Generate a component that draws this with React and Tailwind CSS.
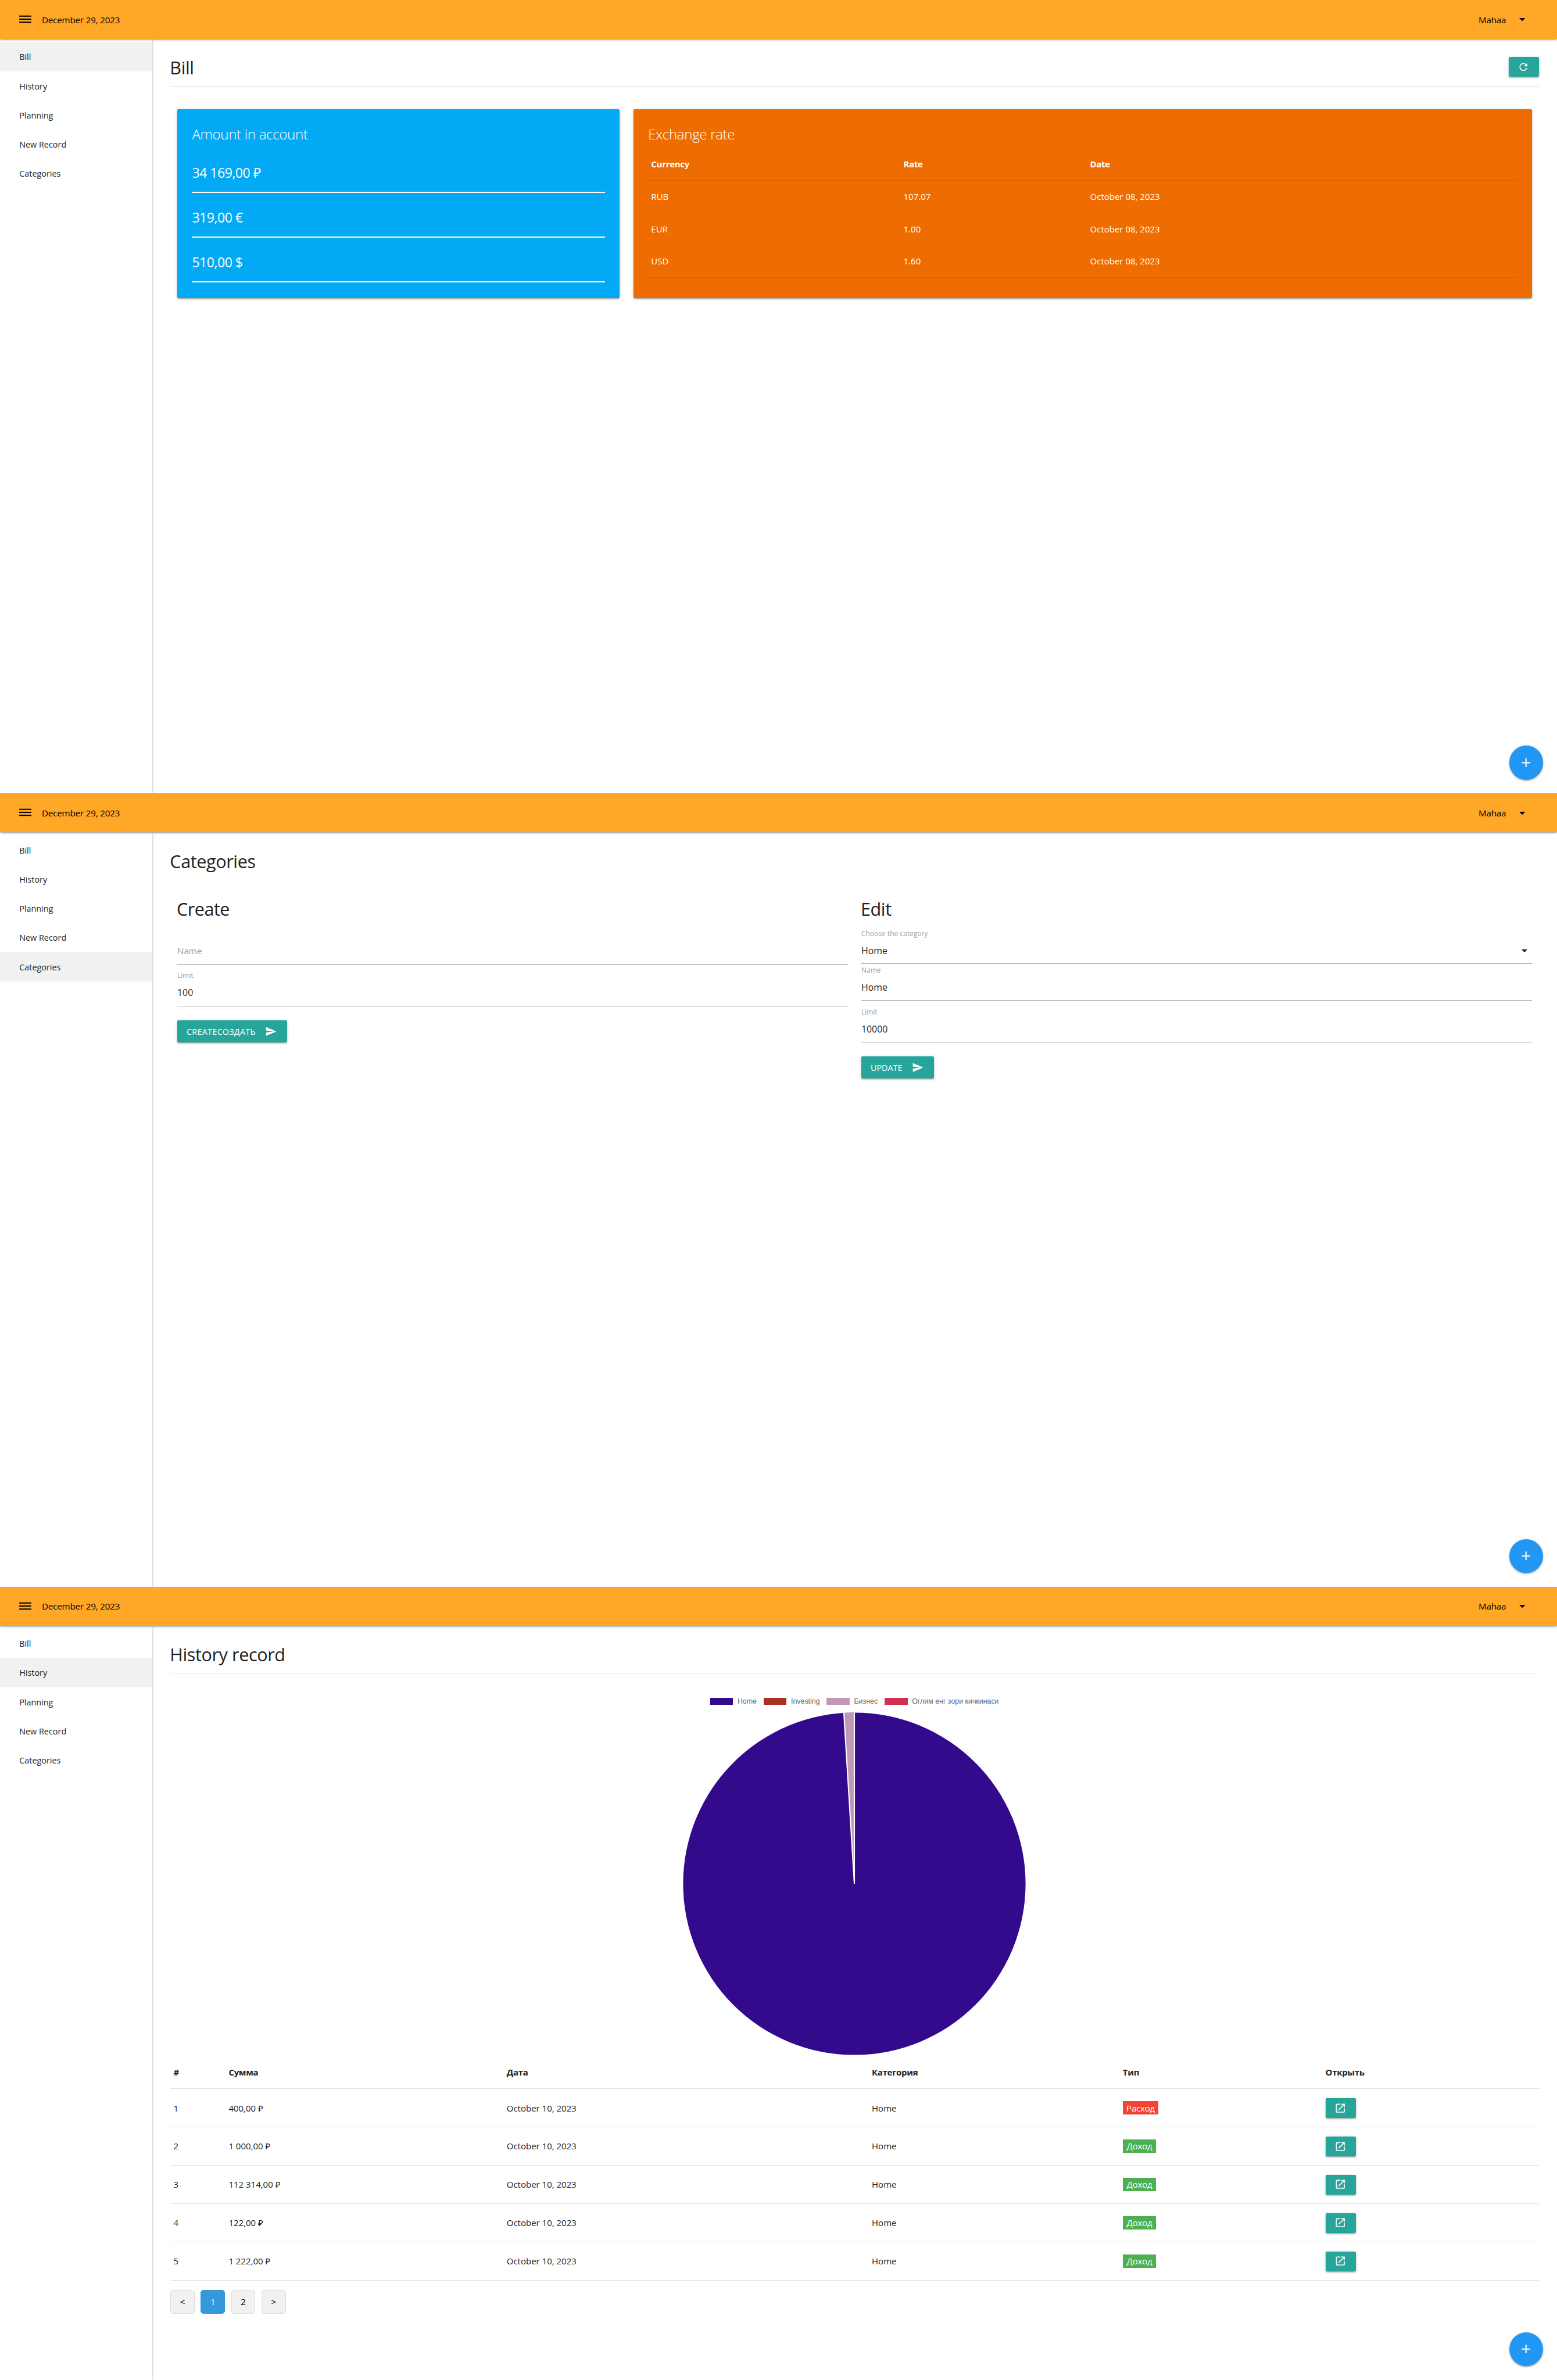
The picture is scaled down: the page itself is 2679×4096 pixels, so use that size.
import React from "react";

const NAV_ITEMS = ["Bill", "History", "Planning", "New Record", "Categories"];

const SHADOW =
  "shadow-[0_2px_2px_0_rgba(0,0,0,0.14),0_3px_1px_-2px_rgba(0,0,0,0.12),0_1px_5px_0_rgba(0,0,0,0.2)]";

function Icon({ d, className }) {
  return (
    <svg viewBox="0 0 24 24" fill="currentColor" className={className}>
      <path d={d} />
    </svg>
  );
}

const ICONS = {
  menu: "M2 15.5v2h20v-2H2zm0-5v2h20v-2H2zm0-5v2h20v-2H2z",
  refresh:
    "M17.65 6.35C16.2 4.9 14.21 4 12 4c-4.42 0-7.99 3.58-7.99 8s3.57 8 7.99 8c3.73 0 6.84-2.55 7.73-6h-2.08c-.82 2.33-3.04 4-5.65 4-3.31 0-6-2.69-6-6s2.69-6 6-6c1.66 0 3.14.69 4.22 1.78L13 11h7V4l-2.35 2.35z",
  add: "M19 13h-6v6h-2v-6H5v-2h6V5h2v6h6v2z",
  send: "M2.01 21L23 12 2.01 3 2 10l15 2-15 2z",
  open: "M19 19H5V5h7V3H5c-1.11 0-2 .9-2 2v14c0 1.1.89 2 2 2h14c1.1 0 2-.9 2-2v-7h-2v7zM14 3v2h3.59l-9.83 9.83 1.41 1.41L19 6.41V10h2V3h-7z",
};

function Caret({ className }) {
  return (
    <svg viewBox="0 0 10 5" fill="currentColor" className={className}>
      <path d="M0 0h10L5 5z" />
    </svg>
  );
}

function Navbar() {
  return (
    <header className={`relative z-10 flex h-[67px] shrink-0 items-center bg-[#ffa726] pr-[54.6px] pl-[31.4px] text-black ${SHADOW}`}>
      <Icon d={ICONS.menu} className="size-[25.1px]" />
      <span className="ml-[15.4px] pt-px text-[15.2px] tracking-[-0.18px]">December 29, 2023</span>
      <span className="mr-[22.9px] ml-auto pt-px text-[15.2px] tracking-[-0.25px]">Mahaa</span>
      <Caret className="mt-[1px] h-[5.2px] w-[10.4px]" />
    </header>
  );
}

function Sidebar({ active }) {
  return (
    <aside className={`relative z-[1] w-[261.5px] shrink-0 bg-white pt-[5.9px] ${SHADOW}`}>
      {NAV_ITEMS.map((item) => (
        <div
          key={item}
          className={`flex h-[50.23px] items-center pt-[0.6px] pl-[33.2px] text-[14.4px] font-medium ${item === active ? "bg-[#f1f1f1]" : ""}`}
        >
          {item}
        </div>
      ))}
    </aside>
  );
}

function Screen({ active, title, action, children }) {
  return (
    <section className="relative flex h-[1365.33px] flex-col overflow-hidden bg-white">
      <Navbar />
      <div className="flex min-h-0 flex-1">
        <Sidebar active={active} />
        <main className="flex-1 pr-[31.5px] pl-[31.8px]">
          <div className="flex h-[82.3px] items-start justify-between border-b border-[#e4e4e4] pt-[29.2px]">
            <h3 className="-ml-px text-[30.6px] leading-[40px] tracking-[-0.4px]">{title}</h3>
            {action}
          </div>
          {children}
        </main>
      </div>
      <button className={`absolute right-[23.6px] bottom-[23.5px] flex size-[58.6px] items-center justify-center rounded-full bg-[#2196f3] text-white ${SHADOW}`}>
        <Icon d={ICONS.add} className="size-[25.4px]" />
      </button>
    </section>
  );
}

function SmallButton({ icon, className = "" }) {
  return (
    <button className={`flex h-[34px] w-[52px] items-center justify-center rounded-[2px] bg-[#26a69a] text-white ${SHADOW} ${className}`}>
      <Icon d={icon} className="size-[20.4px]" />
    </button>
  );
}

const RATES = [
  ["RUB", "107.07", "October 08, 2023"],
  ["EUR", "1.00", "October 08, 2023"],
  ["USD", "1.60", "October 08, 2023"],
];

function BillScreen() {
  return (
    <Screen active="Bill" title="Bill" action={<SmallButton icon={ICONS.refresh} className="mt-[2.2px]" />}>
      <div className="mt-[39.1px] flex gap-[23.6px] px-[11.8px] text-white">
        <div className={`h-[324.2px] w-[761.2px] rounded-[2px] bg-[#03a9f4] px-[25.3px] pt-[26px] ${SHADOW}`}>
          <h4 className="mb-[6.8px] text-[24.2px] leading-[34px] font-light tracking-[-0.38px]">Amount in account</h4>
          {["34 169,00 ₽", "319,00 €", "510,00 $"].map((amount) => (
            <p key={amount} className="h-[76.8px] border-b-2 border-white pt-[22.3px] text-[23.2px] leading-[40px] tracking-[-0.55px]">
              {amount}
            </p>
          ))}
        </div>
        <div className={`h-[324.2px] flex-1 rounded-[2px] bg-[#ef6c00] px-[25.3px] pt-[26px] ${SHADOW}`}>
          <h4 className="mb-[6.8px] text-[24.2px] leading-[34px] font-light tracking-[-0.38px]">Exchange rate</h4>
          <div className="text-[15px]">
            <div className="grid h-[55.7px] grid-cols-[434.2px_321px_1fr] items-center border-b border-black/8 pl-[5.2px] font-bold tracking-[-0.3px]">
              <span>Currency</span>
              <span>Rate</span>
              <span>Date</span>
            </div>
            {RATES.map(([currency, rate, date]) => (
              <div key={currency} className="grid h-[55.7px] grid-cols-[434.2px_321px_1fr] items-center border-b border-black/8 pl-[5.2px]">
                <span>{currency}</span>
                <span>{rate}</span>
                <span>{date}</span>
              </div>
            ))}
          </div>
        </div>
      </div>
    </Screen>
  );
}

function SubmitButton({ label, className }) {
  return (
    <button className={`flex h-[37.6px] items-center justify-between rounded-[2px] bg-[#26a69a] pr-[17.1px] pl-[16px] text-[14.4px] text-white ${SHADOW} ${className}`}>
      <span className="pt-[1.6px]">{label}</span>
      <Icon d={ICONS.send} className="size-[20.4px]" />
    </button>
  );
}

function Field({ label, value, caret, className }) {
  return (
    <div className={`border-b border-[#9e9e9e] ${className}`}>
      <div className="text-[12px] leading-[16px] text-[#9e9e9e]">{label}</div>
      <div className="mt-[1px] flex items-center justify-between text-[15.9px] leading-[40px] text-black/90">
        <span>{value}</span>
        {caret && <Caret className="mt-[1px] mr-[7.6px] h-[5px] w-[10px]" />}
      </div>
    </div>
  );
}

function CategoriesScreen() {
  return (
    <Screen active="Categories" title="Categories">
      <div className="mt-[29px] grid grid-cols-2 gap-[23.1px] px-[11.7px]">
        <div>
          <h4 className="-ml-px text-[30.6px] leading-[40px] tracking-[-0.5px]">Create</h4>
          <div className="h-[76.2px] border-b border-[#9e9e9e] pt-[32.1px] text-[15.2px] leading-[40px] text-[#9e9e9e]">Name</div>
          <Field label="Limit" value="100" className="h-[72px] pt-[10.8px]" />
          <SubmitButton label="CREATEСОЗДАТЬ" className="mt-[24.2px] w-[188.9px] tracking-[0.25px]" />
        </div>
        <div>
          <h4 className="-ml-px text-[30.6px] leading-[40px] tracking-[-0.4px]">Edit</h4>
          <Field label="Choose the category" value="Home" caret className="h-[75.7px] pt-[15.5px]" />
          <Field label="Name" value="Home" className="h-[62.9px] pt-[2.9px]" />
          <Field label="Limit" value="10000" className="h-[71.7px] pt-[11.7px]" />
          <SubmitButton label="UPDATE" className="mt-[24.1px] w-[124.9px]" />
        </div>
      </div>
    </Screen>
  );
}

const LEGEND = [
  ["Home", "bg-[#330a8c]", "w-[44.9px]"],
  ["Investing", "bg-[#a93024]", "w-[61.3px]"],
  ["Бизнес", "bg-[#c297b8]", "w-[52.5px]"],
  ["Оглим енг зори кичкинаси", "bg-[#cf3053]", "w-[151.5px]"],
];

const RECORDS = [
  ["1", "400,00 ₽", "October 10, 2023", "Home", "Расход"],
  ["2", "1 000,00 ₽", "October 10, 2023", "Home", "Доход"],
  ["3", "112 314,00 ₽", "October 10, 2023", "Home", "Доход"],
  ["4", "122,00 ₽", "October 10, 2023", "Home", "Доход"],
  ["5", "1 222,00 ₽", "October 10, 2023", "Home", "Доход"],
];

const COLUMNS = "grid grid-cols-[94.9px_478.4px_628.3px_431.8px_348.7px_1fr] items-center border-b border-[#e0e0e0] pl-[5.2px]";

const BADGES = {
  Расход: "w-[61.3px] bg-[#f44336]",
  Доход: "w-[57.3px] bg-[#4caf50]",
};

function Pie() {
  return (
    <svg viewBox="-295 -295 590 590" className="mx-auto mt-[10.9px] block size-[590px]">
      <circle r="294.6" fill="#330a8c" />
      <path d="M0 0L-18.1 -294.1A294.6 294.6 0 0 1 0 -294.6Z" fill="#c297b8" />
      <path d="M-18.1 -295L0 0V-295" fill="none" stroke="#fff" strokeWidth="2.1" strokeLinejoin="bevel" />
    </svg>
  );
}

function HistoryScreen() {
  return (
    <Screen active="History" title="History record">
      <div className="mt-[40.1px] flex justify-center pl-[1.6px] font-['Liberation_Sans',sans-serif] text-[12.4px] leading-[16px] text-[#666]">
        {LEGEND.map(([name, color, width]) => (
          <div key={name} className="flex items-center gap-[7.6px]">
            <span className={`h-[11.2px] w-[39.6px] ${color}`} />
            <span className={`whitespace-nowrap ${width}`}>{name}</span>
          </div>
        ))}
      </div>
      <Pie />
      <div className="text-[15px]">
        <div className={`${COLUMNS} h-[58.4px] pt-[1.6px] font-bold tracking-[-0.3px]`}>
          <span>#</span>
          <span>Сумма</span>
          <span>Дата</span>
          <span>Категория</span>
          <span>Тип</span>
          <span>Открыть</span>
        </div>
        {RECORDS.map(([id, sum, date, category, type]) => (
          <div key={id} className={`${COLUMNS} h-[65.95px]`}>
            <span>{id}</span>
            <span>{sum}</span>
            <span>{date}</span>
            <span>{category}</span>
            <span className={`flex h-[23px] items-center justify-center tracking-[-0.2px] text-white ${BADGES[type]}`}>{type}</span>
            <SmallButton icon={ICONS.open} />
          </div>
        ))}
      </div>
      <div className="mt-[15.5px] flex gap-[10.4px] text-[15.2px]">
        {["<", "1", "2", ">"].map((label) => (
          <button
            key={label}
            className={`flex size-[41.8px] items-center justify-center rounded-[5px] border ${
              label === "1" ? "border-[#3498db] bg-[#3498db] text-white" : "border-[#dddddd] bg-[#f1f1f1] text-black"
            }`}
          >
            {label}
          </button>
        ))}
      </div>
    </Screen>
  );
}

export default function App() {
  return (
    <div className="w-[2679px] bg-white font-['Open_Sans','Noto_Sans',sans-serif] text-[#212121]">
      <BillScreen />
      <CategoriesScreen />
      <HistoryScreen />
    </div>
  );
}
